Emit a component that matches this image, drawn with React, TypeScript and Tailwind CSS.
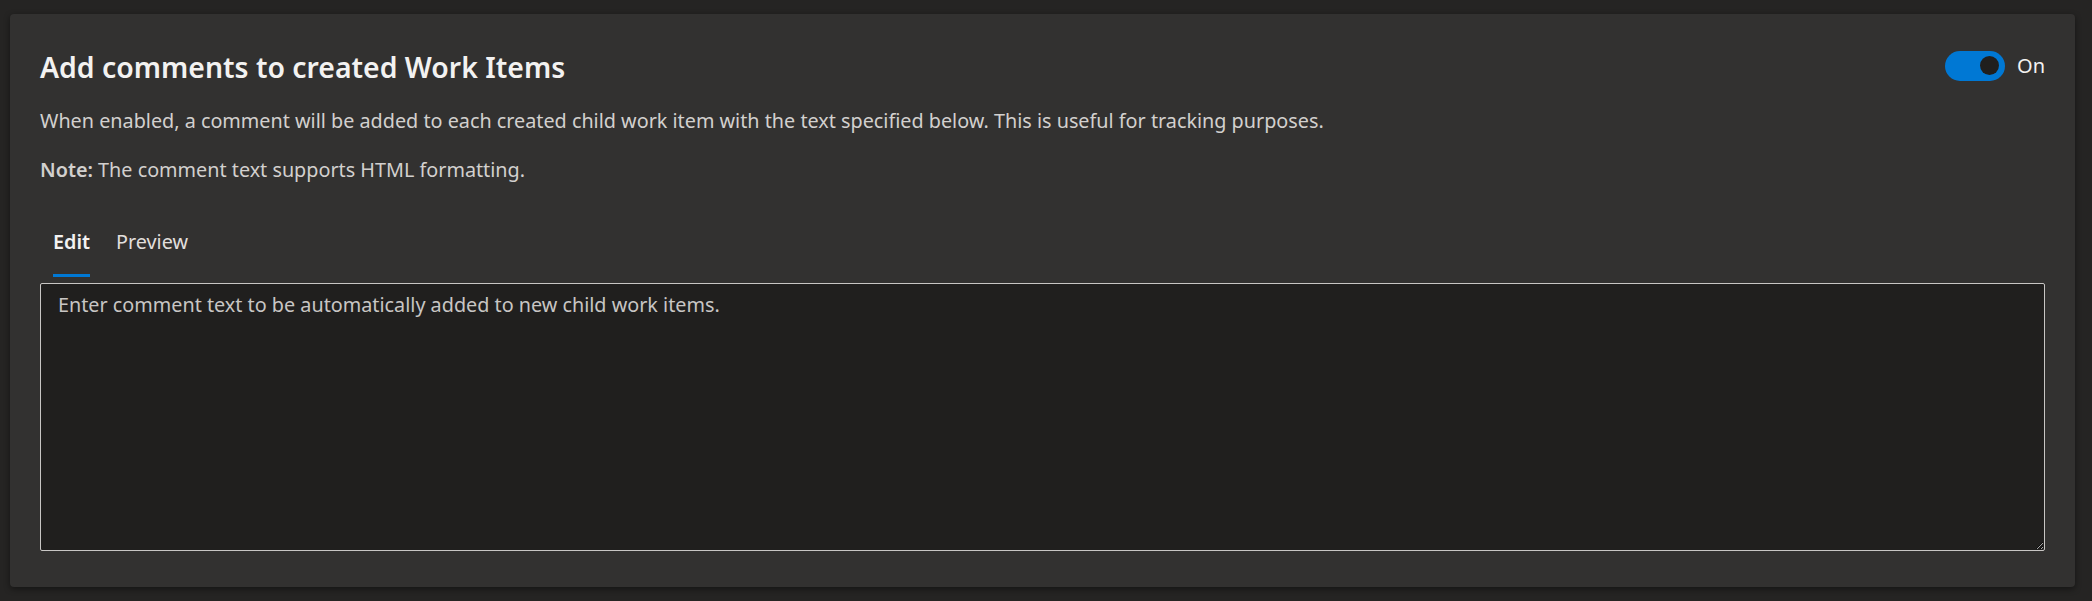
import { useState } from "react";

export default function App() {
  const [enabled, setEnabled] = useState(true);
  const [tab, setTab] = useState<"edit" | "preview">("edit");
  const [text, setText] = useState("");

  return (
    <div
      className="min-h-screen bg-[#252423] pt-[14px] pl-[10px] pr-[17px] pb-[14px]"
      style={{ fontFamily: '"Noto Sans", "Open Sans", sans-serif' }}
    >
      <div className="rounded-[4px] bg-[#323130] px-[30px] pt-[30px] pb-[36px] shadow-[0_2px_6px_rgba(0,0,0,0.45)]">
        <div className="flex items-center justify-between">
          <h2 className="text-[28.4px] leading-[46px] font-semibold text-[#f3f2f1]">
            Add comments to created Work Items
          </h2>
          <button
            type="button"
            onClick={() => setEnabled(!enabled)}
            className="-mt-[3px] flex items-center gap-[12px]"
          >
            <span
              className={`flex h-[30px] w-[60px] items-center rounded-full px-[6px] ${
                enabled ? "justify-end bg-[#0078d4]" : "justify-start border border-[#c8c6c4] bg-transparent"
              }`}
            >
              <span className={`h-[19px] w-[19px] rounded-full ${enabled ? "bg-[#201f1e]" : "bg-[#c8c6c4]"}`} />
            </span>
            <span className="text-[20px] text-[#f3f2f1]">{enabled ? "On" : "Off"}</span>
          </button>
        </div>

        <p className="mt-[17px] text-[19.8px] leading-[28px] text-[#d2d0ce]">
          When enabled, a comment will be added to each created child work item with the text specified below. This is useful for tracking purposes.
        </p>
        <p className="mt-[21px] text-[19.8px] leading-[28px] text-[#d2d0ce]">
          <span className="font-semibold">Note:</span> The comment text supports HTML formatting.
        </p>

        <div className="mt-[44px] flex gap-[26px] pl-[13px]">
          {(["edit", "preview"] as const).map((t) => (
            <button
              key={t}
              type="button"
              onClick={() => setTab(t)}
              className={`flex flex-col items-stretch text-[19.8px] leading-[28px] ${
                tab === t ? "font-semibold text-[#f3f2f1]" : "text-[#e1dfdd]"
              }`}
            >
              <span>{t === "edit" ? "Edit" : "Preview"}</span>
              <span className={`mt-[18px] h-[3px] ${tab === t ? "bg-[#0078d4]" : "bg-transparent"}`} />
            </button>
          ))}
        </div>

        <textarea
          value={text}
          onChange={(e) => setText(e.target.value)}
          placeholder="Enter comment text to be automatically added to new child work items."
          className="mt-[6px] block h-[268px] w-full rounded-[2px] border border-[#c8c6c4] bg-[#201f1e] px-[17px] py-[7px] text-[19.8px] leading-[28px] text-[#f3f2f1] placeholder:text-[#c8c6c4] outline-none"
        />
      </div>
    </div>
  );
}
